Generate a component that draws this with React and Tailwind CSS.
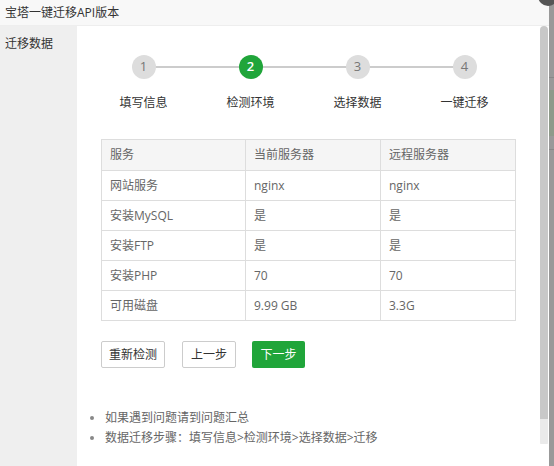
import React from "react";

const steps = ["填写信息", "检测环境", "选择数据", "一键迁移"];

const rows = [
  ["网站服务", "nginx", "nginx"],
  ["安装MySQL", "是", "是"],
  ["安装FTP", "是", "是"],
  ["安装PHP", "70", "70"],
  ["可用磁盘", "9.99 GB", "3.3G"],
];

const font = { fontFamily: '"Open Sans", "Noto Sans CJK SC", sans-serif' };

export default function App() {
  return (
    <div className="relative flex w-[554px] h-[466px] overflow-hidden bg-[#999]" style={font}>
      {/* dialog */}
      <div className="flex flex-col w-[549px] h-full bg-white">
        {/* title */}
        <div className="h-[26px] shrink-0 flex items-center px-[5px] bg-[#f8f8f8] border-b border-[#eee] text-[12px] text-[#333]">
          宝塔一键迁移API版本
        </div>

        <div className="flex flex-1 min-h-0">
          {/* sidebar */}
          <div className="w-[77px] shrink-0 bg-[#efefef] pt-[9px] pl-[5px] text-[12px] text-[#333]">
            迁移数据
          </div>

          {/* content */}
          <div className="flex-1 pl-[24px] pt-[29px]">
            {/* steps */}
            <div className="-ml-[11px]">
              <div className="relative w-[428px] h-[24px]">
                <div className="absolute left-[54px] right-[54px] top-[11px] h-[2px] bg-[#ccc]" />
                <div className="relative flex">
                  {steps.map((s, i) => (
                    <div key={s} className="w-[107px] flex justify-center">
                      <div
                        className={`w-[24px] h-[24px] rounded-full flex items-center justify-center text-[13px] ${
                          i === 1 ? "bg-[#20a53a] text-white font-semibold" : "bg-[#ddd] text-[#777]"
                        }`}
                      >
                        {i + 1}
                      </div>
                    </div>
                  ))}
                </div>
              </div>
              <div className="flex w-[428px] mt-[15px]">
                {steps.map((s) => (
                  <div key={s} className="w-[107px] text-center text-[12px] text-[#333]">
                    {s}
                  </div>
                ))}
              </div>
            </div>

            {/* table */}
            <table className="mt-[27px] w-[415px] border-collapse text-[12px] text-[#666] table-fixed">
              <thead>
                <tr className="bg-[#f5f5f5] h-[31px]">
                  <th className="w-[144px] border border-[#ddd] pl-[8px] text-left font-normal">服务</th>
                  <th className="w-[135px] border border-[#ddd] pl-[8px] text-left font-normal">当前服务器</th>
                  <th className="border border-[#ddd] pl-[8px] text-left font-normal">远程服务器</th>
                </tr>
              </thead>
              <tbody>
                {rows.map((r) => (
                  <tr key={r[0]} className="h-[30px]">
                    {r.map((c, j) => (
                      <td key={j} className="border border-[#ddd] pl-[8px]">
                        {c}
                      </td>
                    ))}
                  </tr>
                ))}
              </tbody>
            </table>

            {/* buttons */}
            <div className="flex mt-[20px] text-[12px]">
              <button className="h-[27px] px-[7px] border border-[#ccc] rounded-[2px] bg-white text-[#333]">
                重新检测
              </button>
              <button className="ml-[17px] h-[27px] px-[8px] border border-[#ccc] rounded-[2px] bg-white text-[#333]">
                上一步
              </button>
              <button className="ml-[16px] h-[27px] w-[53px] rounded-[2px] bg-[#20a53a] text-white">
                下一步
              </button>
            </div>

            {/* notes */}
            <ul className="mt-[40px] -ml-[10px] list-disc pl-[14px] text-[12px] text-[#666] leading-[20px] marker:text-[#888]">
              <li>如果遇到问题请到问题汇总</li>
              <li>数据迁移步骤：填写信息&gt;检测环境&gt;选择数据&gt;迁移</li>
            </ul>
          </div>

          {/* scrollbar */}
          <div className="w-[8px] shrink-0 mr-[1px] pb-[20px] flex flex-col">
            <div className="flex-1 flex flex-col rounded-[4px] overflow-hidden">
              <div className="h-[393px] bg-[#c8c8c8]" />
              <div className="h-[25px] bg-[#eaeaea]" />
            </div>
          </div>
        </div>
      </div>

      {/* backdrop strip */}
      <div className="flex-1 flex flex-col">
        <div className="h-[77px]" />
        <div className="h-[1px] bg-[#888]" />
        <div className="h-[12px]" />
        <div className="h-[46px] bg-[#8e9a8a]" />
        <div className="h-[13px]" />
        <div className="h-[1px] bg-[#888]" />
      </div>

      {/* close */}
      <div className="absolute right-[-4px] top-[-14px] w-[20px] h-[20px] rounded-full bg-[#555]" />
    </div>
  );
}
